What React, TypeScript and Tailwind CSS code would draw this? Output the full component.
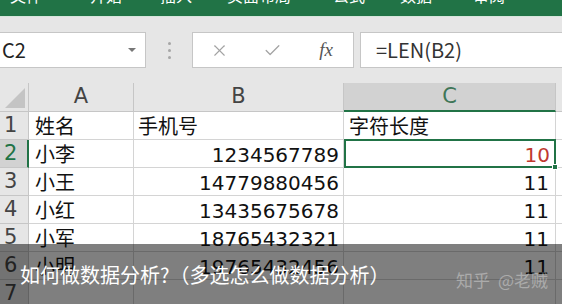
import React from 'react';
import { X, Check } from 'lucide-react';

const rows = [
  { n: 1, a: '姓名', b: '手机号', c: '字符长度', head: true },
  { n: 2, a: '小李', b: '1234567789', c: '10' },
  { n: 3, a: '小王', b: '14779880456', c: '11' },
  { n: 4, a: '小红', b: '13435675678', c: '11' },
  { n: 5, a: '小军', b: '18765432321', c: '11' },
  { n: 6, a: '小明', b: '19765432456', c: '11' },
  { n: 7, a: '', b: '', c: '' },
];

// ribbon tabs with their left spacing
const tabs = [
  { t: '文件', cls: 'ml-[10px]' },
  { t: '开始', cls: 'ml-[48px]' },
  { t: '插入', cls: 'ml-[38px]' },
  { t: '页面布局', cls: 'ml-[35px]' },
  { t: '公式', cls: 'ml-[42px]' },
  { t: '数据', cls: 'ml-[35px]' },
  { t: '审阅', cls: 'ml-[41px]' },
];

export default function App() {
  return (
    <div className="relative w-[562px] h-[304px] overflow-hidden bg-[#e6e6e6] font-['DejaVu_Sans','Noto_Sans_CJK_SC',sans-serif]">
      {/* ribbon, only the bottom edge of the tabs shows */}
      <div className="h-[16px] bg-[#217346] overflow-hidden">
        <div className="flex whitespace-nowrap -mt-[13px] text-[16px] leading-[16px] text-white font-['Noto_Sans_CJK_SC',sans-serif]">
          {tabs.map((t) => (
            <span key={t.t} className={'shrink-0 ' + t.cls}>
              {t.t}
            </span>
          ))}
        </div>
      </div>
      <div className="h-px bg-[#d6e6dc]" />

      {/* formula bar */}
      <div className="h-[66px] pt-[15px] flex items-start font-['Noto_Sans_CJK_SC',sans-serif]">
        <div className="w-[146px] h-[36px] bg-white border border-[#c6c6c6] border-l-0 flex items-center justify-between pl-[2px] pr-[9px]">
          <span className="text-[20px] text-[#222]">C2</span>
          <span className="w-0 h-0 border-l-[4px] border-r-[4px] border-t-[4px] border-l-transparent border-r-transparent border-t-[#777]" />
        </div>
        <div className="w-[46px] h-[36px] flex flex-col items-center justify-center gap-[4px]">
          <span className="w-[3px] h-[3px] rounded-full bg-[#a6a6a6]" />
          <span className="w-[3px] h-[3px] rounded-full bg-[#a6a6a6]" />
          <span className="w-[3px] h-[3px] rounded-full bg-[#a6a6a6]" />
        </div>
        <div className="w-[162px] h-[36px] bg-white border border-[#c6c6c6] flex items-center">
          <div className="w-[53px] flex justify-center">
            <X size={19} strokeWidth={1.4} className="text-[#a3a3a3]" />
          </div>
          <div className="w-[53px] flex justify-center">
            <Check size={19} strokeWidth={1.6} className="text-[#a3a3a3]" />
          </div>
          <div className="w-[54px] flex justify-center">
            <span className="text-[19px] italic text-[#555] font-['Liberation_Serif',serif]">fx</span>
          </div>
        </div>
        <div className="ml-[6px] flex-1 h-[36px] bg-white border border-[#c6c6c6] border-r-0 flex items-center pl-[15px]">
          <span className="text-[20px] text-[#333]">=LEN(B2)</span>
        </div>
      </div>

      {/* sheet */}
      <div className="grid grid-cols-[29px_105px_210px_212px_6px] grid-rows-[29px] auto-rows-[28px]">
        <div className="bg-[#e6e6e6] border-r border-b border-[#c6c6c6] flex items-end justify-end pr-[3px] pb-[3px]">
          <svg width="20" height="20" viewBox="0 0 20 20">
            <polygon points="20,0 20,20 0,20" fill="#c4c4c4" />
          </svg>
        </div>
        <div className="bg-[#e6e6e6] border-r border-b border-[#c6c6c6] flex items-center justify-center text-[21px] text-[#444]">A</div>
        <div className="bg-[#e6e6e6] border-r border-b border-[#c6c6c6] flex items-center justify-center text-[21px] text-[#444]">B</div>
        <div className="bg-[#d2d2d2] border-r border-[#c6c6c6] border-b-2 border-b-[#217346] flex items-center justify-center text-[21px] text-[#3f7658]">C</div>
        <div className="bg-[#e6e6e6] border-b border-[#c6c6c6]" />

        {rows.map((r) => {
          const sel = r.n === 2;
          return (
            <React.Fragment key={r.n}>
              <div
                className={
                  sel
                    ? 'bg-[#d2d2d2] border-r-2 border-r-[#217346] border-b border-b-[#c6c6c6] flex items-center pl-[4px] text-[21px] text-[#217346]'
                    : 'bg-[#e6e6e6] border-r border-b border-[#c6c6c6] flex items-center pl-[4px] text-[21px] text-[#444]'
                }
              >
                {r.n}
              </div>
              <div className="bg-white border-r border-b border-[#d4d4d4] flex items-center pl-[6px] pt-[2px] text-[20px] text-[#111]">
                {r.a}
              </div>
              <div
                className={
                  r.head
                    ? 'bg-white border-r border-b border-[#d4d4d4] flex items-center pl-[4px] pt-[2px] text-[20px] text-[#111]'
                    : 'bg-white border-r border-b border-[#d4d4d4] flex items-center justify-end pr-[4px] pt-[2px] text-[20px] text-[#111]'
                }
              >
                {r.b}
              </div>
              {sel ? (
                <div className="relative bg-white border-2 border-[#217346] -mt-px flex items-center justify-end pr-[4px] pt-[3px] text-[20px] text-[#c0392f]">
                  {r.c}
                  <span className="absolute -right-[4px] -bottom-[4px] w-[6px] h-[6px] bg-[#217346] border border-white" />
                </div>
              ) : (
                <div
                  className={
                    r.head
                      ? 'bg-white border-r border-b border-[#d4d4d4] flex items-center pl-[5px] pt-[2px] text-[20px] text-[#111]'
                      : 'bg-white border-r border-b border-[#d4d4d4] flex items-center justify-end pr-[6px] pt-[2px] text-[20px] text-[#111]'
                  }
                >
                  {r.c}
                </div>
              )}
              <div className="bg-white border-b border-[#d4d4d4]" />
            </React.Fragment>
          );
        })}
      </div>

      {/* caption overlay */}
      <div className="absolute left-0 bottom-0 w-full h-[60px] bg-black/50 flex items-center justify-between pl-[20px] pr-[14px] pt-[2px] font-['Noto_Sans_CJK_SC',sans-serif]">
        <span className="text-[20px] text-white">如何做数据分析?（多选怎么做数据分析）</span>
        <span className="flex gap-[8px] text-[17px] text-white/35 mt-[10px]">
          <span>知乎</span>
          <span>@老贼</span>
        </span>
      </div>
    </div>
  );
}
